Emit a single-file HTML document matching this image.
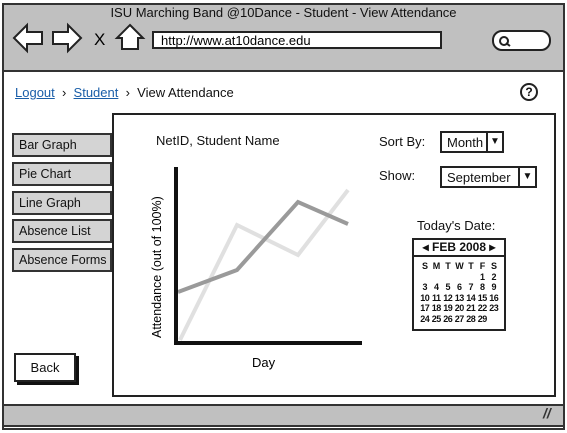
<!DOCTYPE html>
<html><head><style>
*{margin:0;padding:0;box-sizing:border-box}
body{width:567px;height:433px;background:#fff;position:relative;overflow:hidden;font-family:"Liberation Sans",sans-serif;font-size:13px;color:#111}
.a{position:absolute}
.btn{position:absolute;left:12px;width:100px;height:24px;background:#d4d4d4;border:2px solid #333;padding:3px 0 0 5px;font-size:12.5px}
.cal{display:grid;grid-template-columns:repeat(7,11.5px);font-size:9px;font-weight:bold;line-height:10.5px;letter-spacing:-0.5px;text-align:center}
</style></head><body>
<div class="a" style="left:2px;top:3px;width:563px;height:427px;border:2px solid #333"></div>
<div class="a" style="left:2px;top:3px;width:563px;height:69px;background:#c0c0c0;border:2px solid #333"></div>
<div class="a" style="left:0;top:5px;width:567px;text-align:center;font-size:13px">ISU Marching Band @10Dance - Student - View Attendance</div>
<svg class="a" style="left:0;top:0" width="567" height="72">
<path d="M14 38 L27 25 L27 32 L42 32 L42 44 L27 44 L27 51 Z" fill="#fff" stroke="#222" stroke-width="2"/>
<path d="M81 38 L68 25 L68 32 L53 32 L53 44 L68 44 L68 51 Z" fill="#fff" stroke="#222" stroke-width="2"/>
<text x="94" y="45" font-size="17" font-family="Liberation Sans">X</text>
<path d="M130 25 L143 38 L138 38 L138 49 L122 49 L122 38 L117 38 Z" fill="#fff" stroke="#222" stroke-width="2"/>
<rect x="153" y="32" width="288" height="16" fill="#fff" stroke="#222" stroke-width="2"/>
<text x="161" y="45" font-size="13" font-family="Liberation Sans">http://www.at10dance.edu</text>
<rect x="493" y="31" width="57" height="19" rx="9" fill="#fff" stroke="#222" stroke-width="2"/>
<circle cx="504" cy="41" r="4" fill="none" stroke="#222" stroke-width="2"/>
<path d="M506 43 L510 46" stroke="#222" stroke-width="2"/>
</svg>
<div class="a" style="left:15px;top:85px;font-size:13px"><span style="color:#1a5ea8;text-decoration:underline">Logout</span> &nbsp;›&nbsp; <span style="color:#1a5ea8;text-decoration:underline">Student</span> &nbsp;›&nbsp; View Attendance</div>
<div class="a" style="left:520px;top:83px;width:18px;height:18px;border:2px solid #222;border-radius:50%;font-size:12px;font-weight:bold;text-align:center;line-height:14px">?</div>
<div class="a" style="left:112px;top:113px;width:444px;height:284px;border:2px solid #222"></div>
<div class="btn" style="top:133px">Bar Graph</div>
<div class="btn" style="top:162px">Pie Chart</div>
<div class="btn" style="top:191px">Line Graph</div>
<div class="btn" style="top:219px">Absence List</div>
<div class="btn" style="top:248px">Absence Forms</div>
<div class="a" style="left:14px;top:353px;width:62px;height:29px;border:2px solid #222;box-shadow:3px 3px 0 #111;text-align:center;line-height:25px">Back</div>
<div class="a" style="left:156px;top:133px">NetID, Student Name</div>
<svg class="a" style="left:0;top:0" width="567" height="433">
<polyline points="180,340 237,225 298,255 348,190" fill="none" stroke="#e0e0e0" stroke-width="4"/>
<polyline points="178,292 237,270 298,202 348,224" fill="none" stroke="#9a9a9a" stroke-width="4"/>
<path d="M176 167 L176 343 L362 343" fill="none" stroke="#111" stroke-width="4"/>
<text transform="translate(161,338) rotate(-90)" font-size="12.5" font-family="Liberation Sans">Attendance (out of 100%)</text>
<text x="252" y="367" font-size="13" font-family="Liberation Sans">Day</text>
</svg>
<div class="a" style="left:379px;top:134px">Sort By:</div>
<div class="a" style="left:440px;top:131px;width:64px;height:22px;border:2px solid #222;padding:2px 0 0 5px">Month</div>
<div class="a" style="left:486px;top:131px;width:18px;height:22px;border:2px solid #222;font-size:10px;text-align:center;line-height:18px">▼</div>
<div class="a" style="left:379px;top:168px">Show:</div>
<div class="a" style="left:440px;top:166px;width:97px;height:22px;border:2px solid #222;padding:2px 0 0 5px">September</div>
<div class="a" style="left:518px;top:166px;width:19px;height:22px;border:2px solid #222;font-size:10px;text-align:center;line-height:18px">▼</div>
<div class="a" style="left:417px;top:218px">Today's Date:</div>
<div class="a" style="left:412px;top:238px;width:94px;height:93px;border:2px solid #222"></div>
<div class="a" style="left:412px;top:238px;width:94px;height:19px;border:2px solid #222;font-size:12px;font-weight:bold;text-align:center;line-height:15px">◂ FEB 2008 ▸</div>
<div class="a cal" style="left:419px;top:261px">
<span>S</span><span>M</span><span>T</span><span>W</span><span>T</span><span>F</span><span>S</span>
<span></span><span></span><span></span><span></span><span></span><span>1</span><span>2</span>
<span>3</span><span>4</span><span>5</span><span>6</span><span>7</span><span>8</span><span>9</span>
<span>10</span><span>11</span><span>12</span><span>13</span><span>14</span><span>15</span><span>16</span>
<span>17</span><span>18</span><span>19</span><span>20</span><span>21</span><span>22</span><span>23</span>
<span>24</span><span>25</span><span>26</span><span>27</span><span>28</span><span>29</span>
</div>
<div class="a" style="left:2px;top:404px;width:563px;height:23px;background:#c0c0c0;border:2px solid #333"></div>
<div class="a" style="left:543px;top:405px;font-size:14px;font-weight:bold;color:#333;font-style:italic">//</div>
</body></html>
